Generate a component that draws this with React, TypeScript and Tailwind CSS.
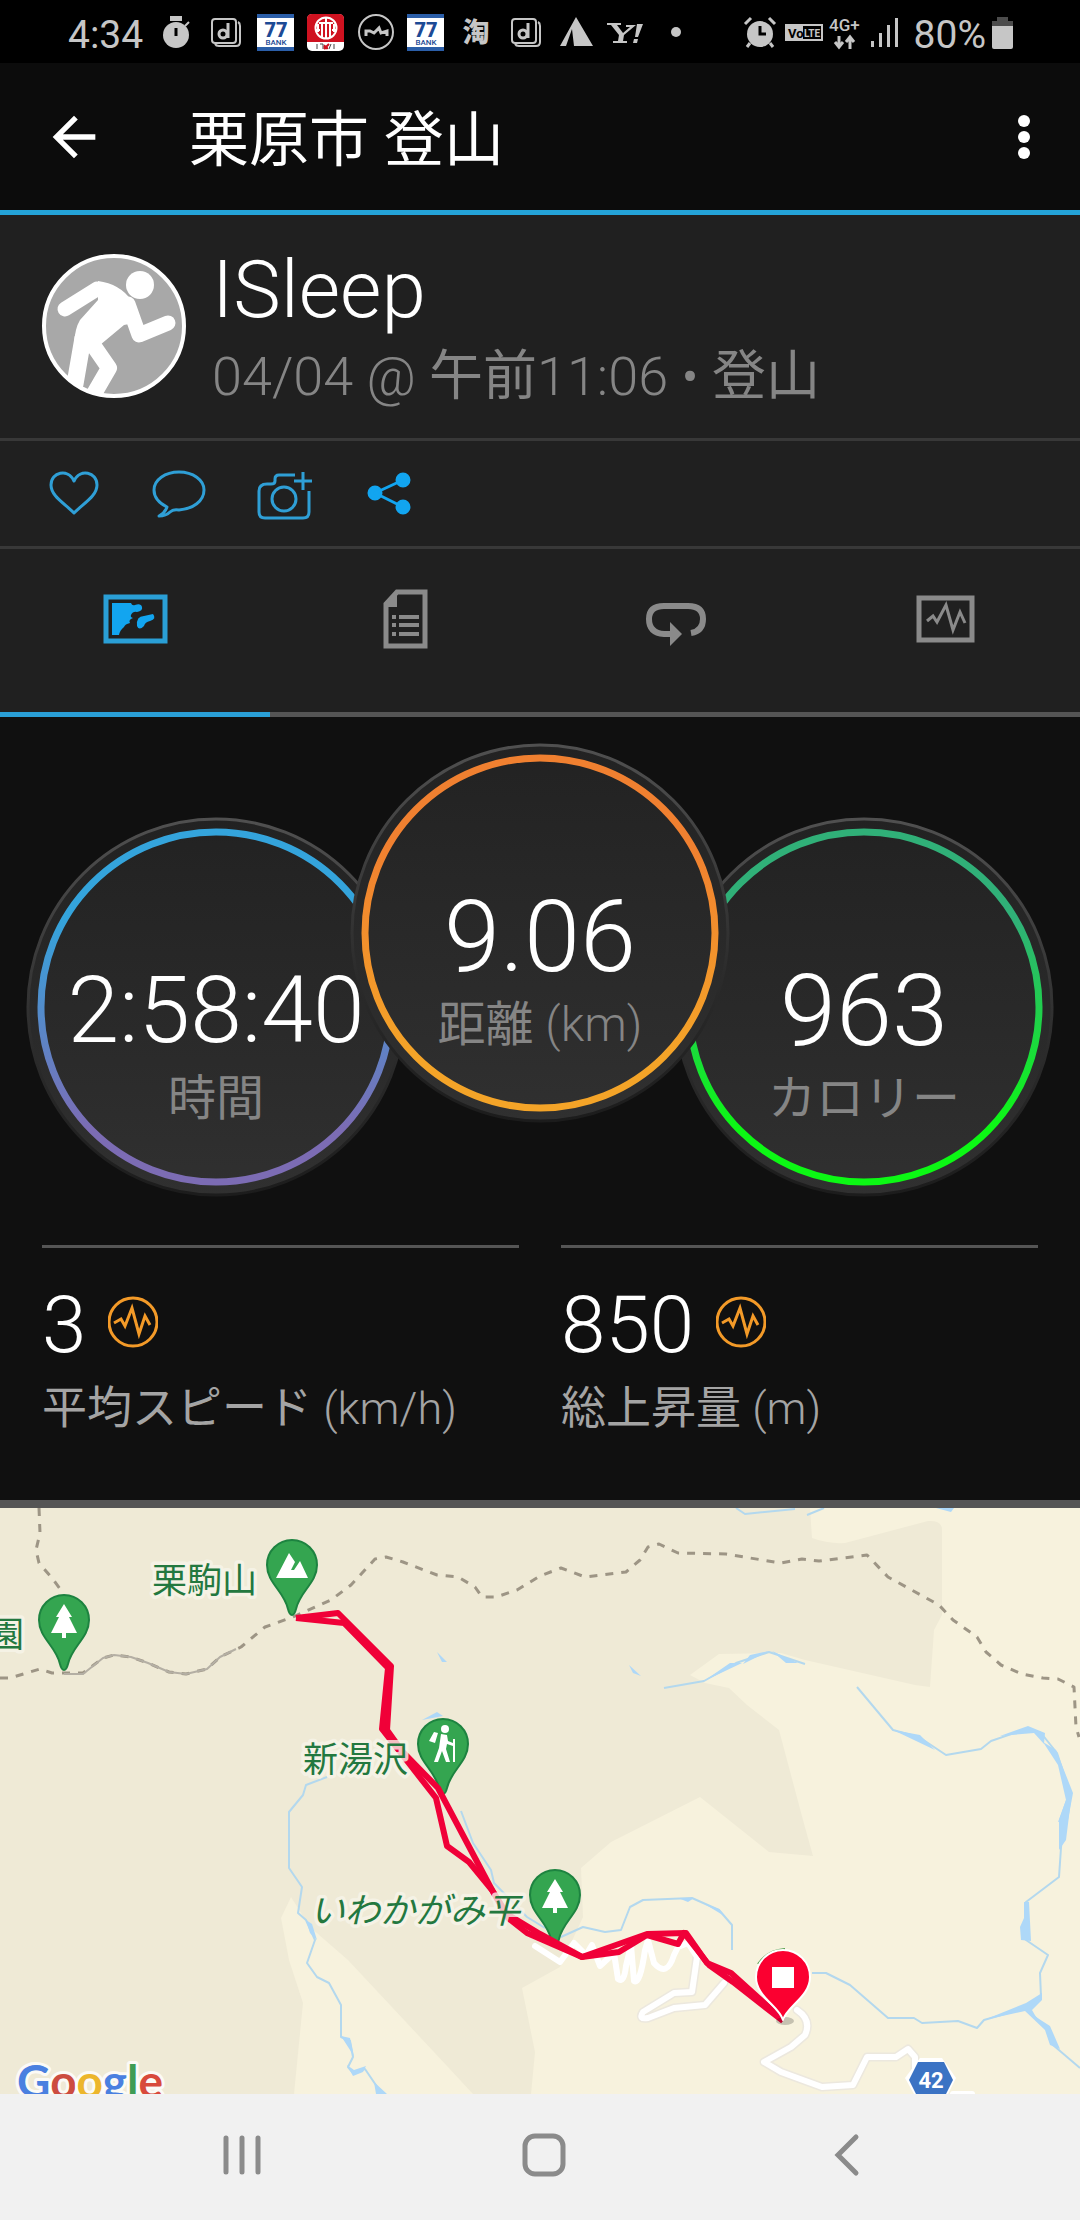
import type { ReactNode } from "react";

function NotificationIcon({ children }: { children: ReactNode }) {
  return (
    <svg viewBox="0 0 50 64" className="h-16 w-[50px] shrink-0 text-[#c6c6c6]" fill="currentColor">
      {children}
    </svg>
  );
}

function DCardIcon() {
  return (
    <NotificationIcon>
      <g fill="none" stroke="currentColor" strokeWidth="2">
        <rect x="11" y="19" width="24" height="24" rx="3" />
        <path d="M37 22q2 1 2 4v16q0 4-4 4H18q-3 0-4-2" />
        <circle cx="22" cy="34" r="4" strokeWidth="3" />
        <path d="M27 23v15" strokeWidth="3" />
      </g>
    </NotificationIcon>
  );
}

function BankIcon() {
  return (
    <NotificationIcon>
      <rect x="6" y="14" width="37" height="37" fill="#fff" />
      <rect x="6" y="14" width="37" height="4" fill="#2b5ea8" />
      <rect x="6" y="47" width="37" height="4" fill="#2b5ea8" />
      <text x="25" y="37" fontSize="20" fontWeight="900" textAnchor="middle" fill="#1d4a95">
        77
      </text>
      <text x="25" y="45" fontSize="8" fontWeight="500" textAnchor="middle" fill="#1d4a95">
        BANK
      </text>
    </NotificationIcon>
  );
}

function StatusBar() {
  return (
    <div className="flex h-[63px] items-start justify-between overflow-hidden bg-black pr-[66px] pl-[68px] text-[39px] leading-[70px] text-[#c6c6c6]">
      <div className="flex">
        <span className="w-[83px]">4:34</span>
        <NotificationIcon>
          <circle cx="25" cy="35" r="13" />
          <path d="M20 17h10v3H20zM34 26l4-4" stroke="currentColor" strokeWidth="2" />
          <path d="M25 28v8" stroke="#000" strokeWidth="3" />
        </NotificationIcon>
        <DCardIcon />
        <BankIcon />
        <NotificationIcon>
          <rect x="6" y="14" width="37" height="37" rx="5" fill="#fff" />
          <path d="M6 42V19q0-5 5-5h27q5 0 5 5v23z" fill="#cf1220" />
          <g fill="none" stroke="#fff" strokeWidth="2">
            <circle cx="25" cy="28" r="10.5" />
            <path d="M25 18v20M21 23v15M29 23v15M17 24v8M33 24v8M18 23h14M15 30h4M31 30h4" />
          </g>
          <path d="M16 44v5M19 44h3v5M33 44v5M30 44l-2 5" fill="none" stroke="#454545" strokeWidth="1" />
          <path d="M23 49l5-5M24 45q-2 4 3 3" fill="none" stroke="#cf1220" strokeWidth="2" />
        </NotificationIcon>
        <NotificationIcon>
          <g fill="none" stroke="currentColor" strokeWidth="2">
            <circle cx="25" cy="32" r="17" />
            <path d="M15 36v-5h4l4 2 5-5 2 5 6-2v5" strokeWidth="3" />
          </g>
        </NotificationIcon>
        <BankIcon />
        <NotificationIcon>
          <text x="25" y="42" fontSize="27" fontWeight="900" textAnchor="middle">
            淘
          </text>
        </NotificationIcon>
        <DCardIcon />
        <NotificationIcon>
          <path d="M9 46l16-29 17 29H23l-2-17-6 17z" />
        </NotificationIcon>
        <NotificationIcon>
          <path
            d="M6 23h14v2h-4l6 8 7-6h-4v-2h10l-12 10-1 6h4v2H12v-2h5l1-6-8-10H6zM36 24h6l-5 13h-3zM33 39h4l-1 4h-4z"
          />
        </NotificationIcon>
        <NotificationIcon>
          <circle cx="25" cy="32" r="5" />
        </NotificationIcon>
      </div>
      <div className="flex">
        <svg viewBox="0 0 172 64" className="h-16 w-[172px]" fill="currentColor">
          <circle cx="18" cy="34" r="13" />
          <path
            d="M3 24l6-6M33 24l-6-6M8 43l-3 4M28 43l3 4"
            fill="none"
            stroke="currentColor"
            strokeWidth="3"
          />
          <path d="M18 26v8h6" fill="none" stroke="#000" strokeWidth="3" />
          <rect x="44" y="25" width="36" height="15" fill="none" stroke="currentColor" strokeWidth="2" />
          <rect x="44" y="25" width="17" height="15" />
          <text x="46" y="38" fontSize="13" fontWeight="700" fill="#000">
            Vo
          </text>
          <text x="62" y="37" fontSize="10" fontWeight="700">
            LTE
          </text>
          <text x="87" y="31" fontSize="17" fontWeight="500">
            4G+
          </text>
          <path
            d="M97 36v10M93 42l4 5 4-5M108 49V38M104 42l4-5 4 5"
            fill="none"
            stroke="currentColor"
            strokeWidth="3"
          />
          <path d="M129 41h3v6h-3zM137 33h3v14h-3zM145 25h3v22h-3zM153 18h3v29h-3z" />
        </svg>
        <span>80%</span>
        <svg viewBox="0 0 28 64" className="h-16 w-[28px]" fill="currentColor">
          <path d="M11 17h11v4h5v5H6v-5h5z" fill="#4c4c4c" />
          <path d="M6 26h21v21q0 2-2 2H8q-2 0-2-2z" />
        </svg>
      </div>
    </div>
  );
}

function Header() {
  return (
    <header className="flex h-[152px] items-center border-b-[5px] border-[#24a3d8] bg-[#0c0c0c] pr-6 pl-[42px]">
      <button aria-label="戻る">
        <svg viewBox="0 0 24 24" className="size-16" fill="#fff">
          <path d="M20 11H7.83l5.59-5.59L12 4l-8 8 8 8 1.41-1.41L7.83 13H20v-2z" />
        </svg>
      </button>
      <h1 className="grow pt-2 pl-[83px] text-[60px] leading-[72px] text-white">栗原市 登山</h1>
      <button aria-label="メニュー">
        <svg viewBox="0 0 64 64" className="size-16" fill="#fff">
          <circle cx="32" cy="16" r="6" />
          <circle cx="32" cy="32" r="6" />
          <circle cx="32" cy="48" r="6" />
        </svg>
      </button>
    </header>
  );
}

function Profile() {
  return (
    <section className="flex gap-[26px] border-b-[3px] border-[#383838] px-[42px] pt-[35px] pb-[29px]">
      <svg viewBox="0 0 144 144" className="mt-1 size-36 shrink-0">
        <clipPath id="avatar">
          <circle cx="72" cy="72" r="70" />
        </clipPath>
        <circle cx="72" cy="72" r="70" fill="#a8a8a8" />
        <g clipPath="url(#avatar)" fill="none" stroke="#fff" strokeLinecap="round" strokeLinejoin="round">
          <circle cx="98" cy="31" r="14" fill="#fff" stroke="none" />
          <path
            d="M56 27Q78 30 89 46Q95 54 97 68L82 71L58 91L52 100L32 90Q33 74 38 66L56 46Z"
            fill="#fff"
            stroke="none"
          />
          <path d="M23 55L55 35" strokeWidth="15" />
          <path d="M86 50L97 81L126 69" strokeWidth="15" />
          <path d="M41 84L33 130" strokeWidth="17" />
          <path d="M49 88L67 114L49 145" strokeWidth="16" />
        </g>
        <circle cx="72" cy="72" r="70" fill="none" stroke="#fff" strokeWidth="4" />
      </svg>
      <div>
        <h2 className="text-[80px] leading-[80px] font-light text-white">ISleep</h2>
        <p className="mt-[15px] text-[54px] leading-[64px] font-light text-[#858585]">
          04/04 @ <span className="font-normal">午前</span>11:06 • <span className="font-normal">登山</span>
        </p>
      </div>
    </section>
  );
}

const actions = [
  {
    label: "いいね",
    drawing: (
      <path d="M53 72C43 62 30 55 30 44C30 31 47 27 53 40C59 27 76 31 76 44C76 55 63 62 53 72Z" />
    ),
  },
  {
    label: "コメント",
    drawing: (
      <path d="M41 66C33 62 28 56 28 49C28 39 39 31 53 31C67 31 78 39 78 49C78 60 67 68 53 69Q47 68 44 71Q40 75 33 75Q39 72 41 66Z" />
    ),
  },
  {
    label: "写真を追加",
    drawing: (
      <>
        <path d="M64 34H48Q44 34 44 38V40Q44 43 40 43H36Q28 43 28 50V71Q28 77 34 77H72Q78 77 78 71V50" />
        <circle cx="53" cy="58" r="12" />
        <path d="M72 31V49M63 40H81" />
      </>
    ),
  },
  {
    label: "共有",
    drawing: (
      <g fill="#12a5f0" stroke="#12a5f0">
        <circle cx="39" cy="52" r="6" />
        <circle cx="67" cy="39" r="6" />
        <circle cx="67" cy="66" r="6" />
        <path d="M67 39L39 52L67 66" fill="none" />
      </g>
    ),
  },
];

function Actions() {
  return (
    <section className="flex border-b-[3px] border-[#383838] px-[21px]">
      {actions.map((action) => (
        <button key={action.label} aria-label={action.label}>
          <svg
            viewBox="0 0 105 105"
            className="size-[105px]"
            fill="none"
            stroke="#2f9fd6"
            strokeWidth="3"
            strokeLinejoin="round"
          >
            {action.drawing}
          </svg>
        </button>
      ))}
    </section>
  );
}

const tabs = [
  {
    label: "概要",
    drawing: (
      <>
        <rect x="7" y="14" width="59" height="44" fill="none" stroke="currentColor" strokeWidth="5" />
        <path
          d="M13 20H32Q33 23 36 22Q42 20 43 24Q44 28 38 29Q34 28 32 32Q31 34 34 35Q29 37 31 40Q26 41 25 44Q21 47 20 52H13Z"
          fill="#12a5f0"
        />
        <path d="M54 31Q58 36 51 38Q46 39 45 43Q40 48 38 43Q37 33 45 33Z" fill="#12a5f0" />
      </>
    ),
  },
  {
    label: "詳細",
    drawing: (
      <>
        <path
          d="M28 9H56V63H17V21Z"
          fill="none"
          stroke="currentColor"
          strokeWidth="5"
        />
        <path d="M28 7V24H15z" />
        <path d="M23 32h4v4h-4zM30 32h20v4H30zM23 40h4v4h-4zM30 40h20v4H30zM23 49h4v4h-4zM30 49h20v4H30z" />
      </>
    ),
  },
  {
    label: "ラップ",
    drawing: (
      <>
        <path
          d="M33 51H25Q10 50 10 36Q10 23 25 23H49Q64 23 64 36Q64 48 52 50"
          fill="none"
          stroke="currentColor"
          strokeWidth="6"
        />
        <path d="M31 39L43 51L31 63Z" />
      </>
    ),
  },
  {
    label: "グラフ",
    drawing: (
      <>
        <rect x="10" y="15" width="53" height="42" fill="none" stroke="currentColor" strokeWidth="5" />
        <path
          d="M18 38L24 33L28 39L37 22L44 47L51 29L56 40"
          fill="none"
          stroke="currentColor"
          strokeWidth="3"
        />
      </>
    ),
  },
];

function Tabs() {
  return (
    <nav className="grid grid-cols-4">
      {tabs.map((tab, i) => (
        <button
          key={tab.label}
          aria-label={tab.label}
          className={
            i === 0
              ? "flex justify-center border-b-[5px] border-[#2a9fd6] pt-[34px] pb-[57px] text-[#2a9fd6]"
              : "flex justify-center border-b-[5px] border-[#555] pt-[34px] pb-[57px] text-[#8a8a8a]"
          }
        >
          <svg viewBox="0 0 72 72" className="size-[72px]" fill="currentColor">
            {tab.drawing}
          </svg>
        </button>
      ))}
    </nav>
  );
}

type GaugeProps = {
  id: string;
  from: string;
  to: string;
  className: string;
  valueClass: string;
  value: string;
  label: string;
  unit?: string;
};

function Gauge({ id, from, to, className, valueClass, value, label, unit }: GaugeProps) {
  return (
    <div className={`relative flex size-[380px] shrink-0 flex-col items-center pt-36 ${className}`}>
      <svg viewBox="0 0 380 380" className="absolute inset-0 size-full">
        <defs>
          <linearGradient id={`${id}-ring`} x1="0" y1="0" x2="0" y2="1">
            <stop offset="0" stopColor={from} />
            <stop offset="0.25" stopColor={from} />
            <stop offset="0.85" stopColor={to} />
            <stop offset="1" stopColor={to} />
          </linearGradient>
          <linearGradient id={`${id}-disc`} x1="0" y1="0" x2="0" y2="1">
            <stop offset="0" stopColor="#222" />
            <stop offset="1" stopColor="#303030" />
          </linearGradient>
          <linearGradient id={`${id}-edge`} x1="0" y1="0" x2="0" y2="1">
            <stop offset="0" stopColor="#505050" />
            <stop offset="0.6" stopColor="#2c2c2c" />
            <stop offset="1" stopColor="#1c1c1c" />
          </linearGradient>
        </defs>
        <circle cx="190" cy="190" r="188" fill={`url(#${id}-disc)`} stroke={`url(#${id}-edge)`} strokeWidth="3" />
        <circle cx="190" cy="190" r="175" fill="none" stroke={`url(#${id}-ring)`} strokeWidth="7" />
      </svg>
      <span className={`relative leading-[100px] font-light text-white ${valueClass}`}>{value}</span>
      <span className="relative mt-[10px] text-[48px] leading-[56px] text-[#858585]">
        {label}
        {unit && <span className="font-light"> {unit}</span>}
      </span>
    </div>
  );
}

function Gauges() {
  return (
    <div className="flex items-start justify-center pt-[26px]">
      <Gauge
        id="time"
        from="#34a4dc"
        to="#7c6cb4"
        className="mt-[74px]"
        valueClass="text-[93px]"
        value="2:58:40"
        label="時間"
      />
      <Gauge
        id="distance"
        from="#f08030"
        to="#f4a428"
        className="z-10 -mx-[56px]"
        valueClass="text-[101px]"
        value="9.06"
        label="距離"
        unit="(km)"
      />
      <Gauge
        id="calories"
        from="#30b078"
        to="#0cf814"
        className="mt-[74px]"
        valueClass="text-[101px]"
        value="963"
        label="カロリー"
      />
    </div>
  );
}

const stats = [
  { value: "3", label: "平均スピード", unit: "(km/h)" },
  { value: "850", label: "総上昇量", unit: "(m)" },
];

function Stats() {
  return (
    <div className="mt-12 grid grid-cols-2 gap-[42px] px-[42px] pb-[63px]">
      {stats.map((stat) => (
        <div key={stat.label} className="border-t-[3px] border-[#555] pt-[37px]">
          <div className="flex gap-[22px] text-[80px] leading-[80px] font-light text-white">
            {stat.value}
            <svg viewBox="0 0 50 80" className="h-20 w-[50px]" fill="none" stroke="#f39a28" strokeWidth="3">
              <circle cx="25" cy="37" r="24" />
              <path d="M6 38L13 34L17 41L24 23L31 49L37 31L42 40" />
            </svg>
          </div>
          <p className="mt-4 text-[45px] leading-[56px] text-[#a4a4a4]">
            {stat.label} <span className="font-light">{stat.unit}</span>
          </p>
        </div>
      ))}
    </div>
  );
}

function Pin({ x, y, children }: { x: number; y: number; children: ReactNode }) {
  return (
    <g transform={`translate(${x} ${y})`} fill="#fff">
      <path
        d="M0 50C-2 50-3 48-4 44C-8 26-25 18-25 0A25 25 0 0 1 25 0C25 18 8 26 4 44C3 48 2 50 0 50Z"
        fill="#34a550"
        stroke="#1d8340"
        strokeWidth="2"
      />
      {children}
    </g>
  );
}

function Tree() {
  return <path d="M0-16L8-3H5L13 13H2V18H-2V13H-13L-5-3H-8Z" />;
}

function ActivityMap() {
  return (
    <svg
      viewBox="0 1508 1080 586"
      className="block w-full"
      role="img"
      aria-label="地図"
      fill="none"
      strokeLinejoin="round"
    >
      <rect y="1508" width="1080" height="586" fill="#efead6" />
      <g fill="#f7f2dd">
        <path d="M810 1508L812 1538Q828 1544 845 1543L928 1521Q942 1520 942 1530V1615L934 1630L930 1687L915 1685L805 1660L781 1653L719 1654L690 1675L705 1683L729 1688L747 1705L779 1730L803 1820L813 1856L769 1852L700 1797L611 1842L581 1868L583 1917L560 1967L522 1988L535 2052L531 2094H1080V1508Z" />
        <path d="M291 1897L281 1918L289 1960L303 2003L294 2094H473L448 2067L348 1960L310 1927Z" />
      </g>

      <g stroke="#b3d8ee" strokeWidth="2">
        <path d="M327 1777L306 1785L303 1795L289 1812V1868L302 1887L298 1913L306 1920L315 1940L307 1963L317 1977L329 1983L341 2005V2037L350 2041L353 2057L348 2067L353 2073L365 2069L382 2094" />
        <path d="M664 1688L704 1681L736 1663L769 1652L805 1664" />
        <path d="M857 1687L893 1730L919 1737L946 1755L981 1749L991 1741L1026 1729L1041 1733L1057 1753L1070 1793L1062 1833L1059 1877L1026 1902V1940L1048 1955L1040 1973L1041 1997L1026 2008L984 2020L977 2028L958 2021L922 2023L914 2018H888L850 1985L826 1973H812" />
        <path d="M1026 2008L1046 2028L1053 2045L1080 2068" />
        <path d="M561 1937L583 1927L605 1932L621 1930L630 1907L643 1900L692 1898L719 1910L732 1925V1950" />
        <path d="M461 1811L473 1843L491 1870L494 1883L527 1917L545 1928" />
        <path d="M736 1508L745 1514L795 1509M807 1515L824 1508" />
      </g>
      <g fill="#aed8f8">
        <path d="M306 1920L312 1924L317 1940L310 1933ZM341 2036L350 2038L354 2057L350 2050ZM347 2065L354 2070L366 2066L363 2072L353 2076ZM374 2082L387 2094H376Z" />
        <path d="M704 1681L730 1663L742 1663ZM743 1664L750 1655L769 1651ZM772 1651L798 1663L786 1663Z" />
        <path d="M893 1730L920 1735L935 1750ZM1000 1736L1028 1726L1045 1733L1044 1744L1034 1733ZM1043 1742L1056 1750L1073 1793L1068 1820L1058 1822L1066 1800L1058 1765Z" />
        <path d="M1066 1800H1071L1066 1840L1059 1850V1820ZM1024 1902H1029L1031 1941L1021 1940L1020 1927L1024 1918ZM984 2020L1026 2003L1042 1993V2000L1032 2010L1036 2017L1050 2026L1060 2049L1050 2045L1045 2030L1025 2011Z" />
        <path d="M678 1898L694 1898L688 1902ZM703 1903L719 1909L726 1917ZM437 1652L447 1662H442ZM629 1665L641 1676L633 1673ZM936 1508H954L951 1512ZM422 1720L437 1712L443 1716Z" />
      </g>

      <g strokeLinecap="round">
        <g stroke="#ece8de" strokeWidth="9">
          <path d="M697 1957L692 1992L674 1993L643 2012Q638 2020 648 2018L674 2008L705 2005L724 1983" />
          <path d="M797 2010Q812 2020 805 2035L791 2047L764 2062L781 2072L822 2087L853 2085L867 2057H896L908 2049L915 2057V2077" />
        </g>
        <g stroke="#fff" strokeWidth="6">
          <path d="M535 1946L560 1962L574 1943L586 1955L592 1945L600 1966L614 1953L618 1979Q624 1984 626 1966L631 1945L634 1981Q640 1985 645 1950L648 1940L654 1963Q667 1978 674 1955L678 1947L688 1943L697 1957L692 1992L674 1993L643 2012Q638 2020 648 2018L674 2008L705 2005L724 1983" />
          <path d="M797 2010Q812 2020 805 2035L791 2047L764 2062L781 2072L822 2087L853 2085L867 2057H896L908 2049L915 2057V2077M953 2094H972" />
        </g>
      </g>

      <g stroke="#9d9585" strokeWidth="3" strokeDasharray="8 8">
        <path d="M39 1508L40 1533L36 1550L39 1563L52 1578L63 1593" />
        <path d="M0 1678H10L40 1669L52 1673H83L103 1658L114 1655L131 1657L148 1663L169 1672L186 1674L207 1669L220 1657L241 1647L265 1627L293 1617L331 1600L351 1585L375 1559L386 1557L403 1562L437 1575L458 1577L475 1587L482 1597H496L517 1590L540 1576L561 1568L585 1577L626 1572L640 1560L648 1547L659 1544L678 1553L726 1554L750 1558L781 1563L802 1559L819 1561L867 1555L888 1577L939 1605L953 1620L977 1637L986 1652L1001 1665L1022 1674L1043 1678L1058 1679L1074 1687L1076 1727L1079 1737" />
      </g>
      <path
        d="M64 1674H83L103 1658L114 1655L131 1657L148 1663L169 1672L186 1674L207 1669L220 1657L236 1649"
        stroke="#b4afa4"
        strokeWidth="2"
      />

      <Pin x={64} y={1620}>
        <Tree />
      </Pin>
      <Pin x={292} y={1565}>
        <path d="M-16 13L-3-12L3-3L-1 5H2L8-4L16 13Z" />
      </Pin>
      <Pin x={443} y={1744}>
        <circle cx="2" cy="-15" r="4" />
        <path d="M-2-10L4-9L5-3L10-1V2L4 0L3 5L7 18H3L-1 7L-5 18H-9L-4 4ZM-9-12L-5-11L-8-1L-14-3Z" />
        <path d="M11-5V18" stroke="#fff" strokeWidth="2" />
      </Pin>
      <Pin x={555} y={1895}>
        <Tree />
      </Pin>

      <g stroke="#f00038" strokeWidth="6">
        <path d="M296 1618L338 1613L391 1666L387 1730L402 1751L438 1788L492 1890L507 1914L540 1934L582 1957L647 1934L686 1933L707 1963L731 1973L783 2020" />
        <path d="M296 1618L344 1623L388 1668L382 1729L404 1757L436 1798L447 1846L469 1862L492 1890L508 1918L527 1933L582 1957L619 1952L647 1935L678 1944L684 1933L709 1965L733 1982L783 2021" />
      </g>

      <g
        fontFamily="'Noto Sans CJK JP', sans-serif"
        fontSize="35"
        fill="#23783f"
        stroke="#f7f5ea"
        strokeOpacity="0.8"
        strokeWidth="7"
        style={{ paintOrder: "stroke" }}
      >
        <text x="-11" y="1647">園</text>
        <text x="152" y="1593">栗駒山</text>
        <text x="303" y="1772">新湯沢</text>
        <text x="310" y="1923" fontStyle="italic">いわかがみ平</text>
      </g>

      <path d="M758 1964Q768 1950 785 1949" stroke="#4c9c48" strokeWidth="2" />
      <ellipse cx="785" cy="2021" rx="9" ry="4" fill="#000" fillOpacity="0.2" />
      <path
        d="M783 2020C779 2006 756 1997 756 1977A27 27 0 0 1 810 1977C810 1997 787 2006 783 2020Z"
        fill="#fb0030"
        stroke="#fff"
        strokeWidth="2"
      />
      <rect x="772" y="1967" width="22" height="21" fill="#fff" />

      <path d="M920 2058H942L956 2078L948 2094H914L905 2078Z" fill="#fff" />
      <path d="M918 2062H944L953 2080L946 2094H916L909 2080Z" fill="#3b73c4" />
      <text x="931" y="2088" fontSize="22" fontWeight="700" textAnchor="middle" fill="#fff">
        42
      </text>

      <text
        x="17"
        y="2098"
        fontFamily="Lato, sans-serif"
        fontSize="46"
        fontWeight="700"
        stroke="#fff"
        strokeOpacity="0.8"
        strokeWidth="6"
        style={{ paintOrder: "stroke" }}
      >
        <tspan fill="#4a80e0">G</tspan>
        <tspan fill="#cc4c40">o</tspan>
        <tspan fill="#ecb62c">o</tspan>
        <tspan fill="#4a80e0">g</tspan>
        <tspan fill="#3f9c54">l</tspan>
        <tspan fill="#d84a3c">e</tspan>
      </text>
    </svg>
  );
}

function NavigationBar() {
  return (
    <nav className="grid grid-cols-3 bg-[#f1f1f1] pr-[83px] pl-[91px]">
      <button aria-label="履歴" className="flex h-[126px] items-center justify-center">
        <svg viewBox="0 0 48 48" className="size-12" stroke="#8b8b8b" strokeWidth="5" strokeLinecap="round">
          <path d="M8 5V39M24 5V39M40 5V39" />
        </svg>
      </button>
      <button aria-label="ホーム" className="flex h-[126px] items-center justify-center">
        <svg viewBox="0 0 48 48" className="size-12" fill="none" stroke="#8b8b8b" strokeWidth="5">
          <rect x="5" y="3" width="38" height="38" rx="10" />
        </svg>
      </button>
      <button aria-label="戻る" className="flex h-[126px] items-center justify-center">
        <svg
          viewBox="0 0 48 48"
          className="size-12"
          fill="none"
          stroke="#8b8b8b"
          strokeWidth="5"
          strokeLinecap="round"
        >
          <path d="M34 4L16 22L34 40" />
        </svg>
      </button>
    </nav>
  );
}

export default function App() {
  return (
    <div className="bg-[#202020] font-['Roboto','Noto_Sans_CJK_JP',sans-serif]">
      <StatusBar />
      <Header />
      <main>
        <Profile />
        <Actions />
        <Tabs />
        <section className="border-b-8 border-[#555] bg-[#101010]">
          <Gauges />
          <Stats />
        </section>
        <ActivityMap />
      </main>
      <NavigationBar />
    </div>
  );
}
